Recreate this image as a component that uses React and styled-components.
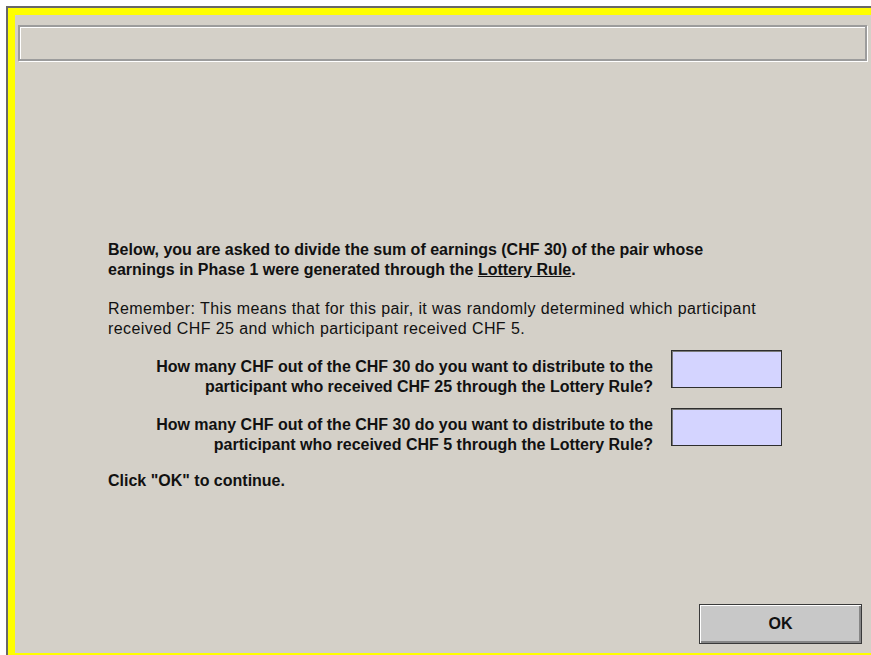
import React from "react";
import styled, { createGlobalStyle } from "styled-components";

const GlobalStyle = createGlobalStyle`
  html, body {
    margin: 0;
    padding: 0;
    overflow: hidden;
    background: #ffffff;
  }
  body {
    font-family: "Liberation Sans", Arial, sans-serif;
    color: #111111;
  }
`;

const Frame = styled.div`
  box-sizing: border-box;
  margin: 6px 0 0 6px;
  width: 865px;
  height: 649px;
  border-top: 2px solid #686868;
  border-left: 2px solid #686868;
  background: #ffff00;
  padding: 7px 0 2px 7px;
`;

const Panel = styled.div`
  box-sizing: border-box;
  height: 100%;
  background: #d4d0c8;
  display: flex;
  flex-direction: column;
  padding: 10px 3px 9px 3px;
`;

const TitleBox = styled.div`
  box-sizing: border-box;
  height: 36px;
  margin-right: 1px;
  border: 2px solid #9c9c9c;
  box-shadow: inset 1px 1px #ffffff, 1px 1px #ffffff;
`;

const Content = styled.div`
  margin: 179px 0 0 90px;
  font-size: 16px;
  line-height: 20px;
`;

const Lead = styled.p`
  margin: 0;
  font-weight: bold;
`;

const Note = styled.p`
  margin: 19px 0 0 0;
  letter-spacing: 0.42px;
`;

const Questions = styled.div`
  display: grid;
  grid-template-columns: 545px 111px;
  column-gap: 18px;
  row-gap: 11px;
  margin-top: 11px;
`;

const Label = styled.div`
  padding-top: 7px;
  text-align: right;
  font-weight: bold;
`;

const AmountInput = styled.input`
  box-sizing: border-box;
  width: 111px;
  height: 38px;
  margin: 0;
  border: 1px solid #2e2e2e;
  box-shadow: inset 1px 1px #7a7a7a;
  background: #d4d4ff;
  font: inherit;
  outline: none;
`;

const Hint = styled.p`
  margin: 16px 0 0 0;
  font-weight: bold;
`;

const Footer = styled.div`
  margin-top: auto;
  display: flex;
  justify-content: flex-end;
  padding-right: 6px;
`;

const OkButton = styled.button`
  box-sizing: border-box;
  width: 163px;
  height: 40px;
  border: 1px solid #3a3a3a;
  background: #c8c8c8;
  box-shadow: inset 1px 1px #ffffff, inset -2px -2px #868686;
  font-family: "Liberation Sans", Arial, sans-serif;
  font-size: 16px;
  font-weight: bold;
  color: #111111;
  padding: 0;
`;

const Underlined = styled.span`
  text-decoration: underline;
`;

const questions = [
  { id: "q25", amount: 25 },
  { id: "q5", amount: 5 },
];

export default function App() {
  return (
    <>
      <GlobalStyle />
      <Frame>
        <Panel>
          <TitleBox />
          <Content>
            <Lead>
              Below, you are asked to divide the sum of earnings (CHF 30) of the pair whose
              <br />
              earnings in Phase 1 were generated through the <Underlined>Lottery Rule</Underlined>.
            </Lead>
            <Note>
              Remember: This means that for this pair, it was randomly determined which participant
              <br />
              received CHF 25 and which participant received CHF 5.
            </Note>
            <Questions>
              {questions.map((q) => (
                <React.Fragment key={q.id}>
                  <Label>
                    How many CHF out of the CHF 30 do you want to distribute to the
                    <br />
                    participant who received CHF {q.amount} through the Lottery Rule?
                  </Label>
                  <AmountInput type="text" name={q.id} />
                </React.Fragment>
              ))}
            </Questions>
            <Hint>Click "OK" to continue.</Hint>
          </Content>
          <Footer>
            <OkButton>OK</OkButton>
          </Footer>
        </Panel>
      </Frame>
    </>
  );
}
